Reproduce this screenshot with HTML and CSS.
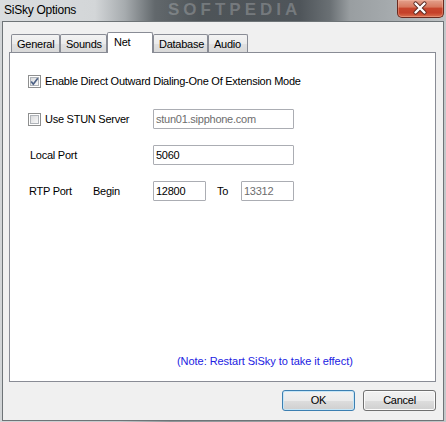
FILE: index.html
```html
<!DOCTYPE html>
<html>
<head>
<meta charset="utf-8">
<title>SiSky Options</title>
<link rel="stylesheet" href="styles.css">
</head>
<body>
<div class="window">
  <div class="titlebar">
    <span class="title">SiSky Options</span>
    <span class="wm">SOFTPEDIA</span>
    <div class="close">
      <svg width="47" height="18" viewBox="0 0 47 18">
        <path d="M18.5 4.5 L27.5 13.5 M27.5 4.5 L18.5 13.5" stroke="#5a2a22" stroke-width="4.2" stroke-linecap="round"/>
        <path d="M18.5 4.5 L27.5 13.5 M27.5 4.5 L18.5 13.5" stroke="#ffffff" stroke-width="2.4" stroke-linecap="round"/>
      </svg>
    </div>
  </div>
  <div class="client">
    <div class="tabs">
      <div class="tab w-general">General</div>
      <div class="tab w-sounds">Sounds</div>
      <div class="tab active w-net">Net</div>
      <div class="tab w-db">Database</div>
      <div class="tab w-audio">Audio</div>
    </div>
    <div class="panel">
      <div class="row row-check">
        <svg class="cb" width="13" height="13" viewBox="0 0 13 13">
          <defs><linearGradient id="cbg1" x1="0" y1="0" x2="1" y2="1"><stop offset="0" stop-color="#d8d9db"/><stop offset="1" stop-color="#fbfbfb"/></linearGradient></defs>
          <rect x="0.5" y="0.5" width="12" height="12" fill="#ffffff" stroke="#8e8f8f"/>
          <rect x="2.5" y="2.5" width="8" height="8" fill="url(#cbg1)" stroke="#b0b4b9"/>
          <path d="M3.2 6.4 L5.3 9.2 L9.8 3.2" fill="none" stroke="#4d6185" stroke-width="1.7"/>
        </svg>
        <span>Enable Direct Outward Dialing-One Of Extension Mode</span>
      </div>
      <div class="row row-stun">
        <div class="lbl lbl-check">
          <svg class="cb" width="13" height="13" viewBox="0 0 13 13">
            <defs><linearGradient id="cbg2" x1="0" y1="0" x2="1" y2="1"><stop offset="0" stop-color="#d8d9db"/><stop offset="1" stop-color="#fbfbfb"/></linearGradient></defs>
            <rect x="0.5" y="0.5" width="12" height="12" fill="#ffffff" stroke="#8e8f8f"/>
            <rect x="2.5" y="2.5" width="8" height="8" fill="url(#cbg2)" stroke="#b0b4b9"/>
          </svg>
          <span>Use STUN Server</span>
        </div>
        <div class="input wide disabled">stun01.sipphone.com</div>
      </div>
      <div class="row">
        <div class="lbl lbl-local">Local Port</div>
        <div class="input wide">5060</div>
      </div>
      <div class="row">
        <div class="lbl-rtp">RTP Port</div>
        <div class="lbl-begin">Begin</div>
        <div class="input narrow">12800</div>
        <div class="lbl-to">To</div>
        <div class="input narrow disabled">13312</div>
      </div>
      <div class="note">(Note: Restart SiSky to take it effect)</div>
    </div>
    <div class="buttons">
      <div class="btn default">OK</div>
      <div class="btn">Cancel</div>
    </div>
  </div>
</div>
</body>
</html>
```

FILE: styles.css
```css
* { box-sizing: border-box; }
html, body { margin: 0; padding: 0; }
body {
  width: 446px;
  height: 422px;
  overflow: hidden;
  font-family: "Liberation Sans", Arial, sans-serif;
  font-size: 11px;
  letter-spacing: -0.25px;
  color: #000;
  background: #cfd3d5;
}
.window {
  width: 446px;
  height: 422px;
  display: flex;
  flex-direction: column;
  background: linear-gradient(to right, #d2d5d7 0, #c3c7ca 120px, #8e9497 170px, #a1a6a9 340px, #c4c8ca 446px);
}
.titlebar {
  position: relative;
  height: 21px;
  flex: none;
  padding-left: 4px;
  background: linear-gradient(to right, #dadddf 0, #d3d6d8 95px, #a6abae 125px, #62686c 155px, #4e5458 200px, #4f555a 300px, #6a7074 330px, #999ea1 350px, #a7acaf 395px, #bfc3c5 446px);
}
.title {
  position: relative;
  z-index: 2;
  font-size: 12px;
  line-height: 21px;
  color: #000;
}
.wm {
  position: absolute;
  left: 168px;
  top: 0;
  font-size: 17px;
  line-height: 19px;
  font-weight: bold;
  letter-spacing: 4px;
  color: rgba(255, 255, 255, 0.22);
  white-space: nowrap;
}
.close {
  position: absolute;
  top: 0;
  right: 2px;
  width: 47px;
  height: 18px;
  border: 1px solid #6a2a1f;
  border-top: none;
  border-radius: 0 0 5px 5px;
  background: linear-gradient(#e3a08c 0%, #d87a60 40%, #c7462d 50%, #c54029 75%, #d9704f 100%);
  box-shadow: inset 0 0 0 1px rgba(255, 200, 180, 0.35);
  overflow: hidden;
}
.close svg { display: block; margin: -1px 0 0 -1px; }
.client {
  flex: 1;
  margin: 0 2px 1px 2px;
  border: 1px solid #6e7477;
  background: #f0f0f0;
  padding: 10px 7px 0 6px;
}
.tabs {
  display: flex;
  align-items: flex-end;
  height: 20px;
  padding-left: 2px;
}
.tab {
  height: 18px;
  border: 1px solid #898c95;
  border-bottom: none;
  border-radius: 2px 2px 0 0;
  background: linear-gradient(#f3f3f3 0%, #ebebeb 50%, #e1e1e1 51%, #d9d9d9 100%);
  padding: 1px 0 0 5px;
  line-height: 16px;
  white-space: nowrap;
}
.tab.active {
  height: 21px;
  background: #fff;
  margin-bottom: -1px;
  position: relative;
  z-index: 1;
  padding-left: 6px;
}
.w-general { width: 49px; }
.w-sounds { width: 47px; }
.w-net { width: 46px; }
.w-db { width: 55px; }
.w-audio { width: 40px; }
.panel {
  width: 427px;
  height: 330px;
  border: 1px solid #898c95;
  background: #fff;
  padding: 22px 0 0 18px;
  display: flex;
  flex-direction: column;
}
.row {
  display: flex;
  align-items: center;
  height: 20px;
  margin-top: 16px;
  white-space: nowrap;
}
.row-check {
  height: 13px;
  margin-top: 0;
  line-height: 13px;
}
.row-stun { margin-top: 21px; }
.cb { display: block; flex: none; margin-right: 4px; }
.lbl {
  width: 125px;
  flex: none;
  display: flex;
  align-items: center;
}
.lbl-local { padding-left: 2px; }
.lbl-rtp { width: 65px; padding-left: 1px; flex: none; }
.lbl-begin { width: 60px; flex: none; }
.lbl-to { width: 24px; margin-left: 11px; flex: none; }
.input {
  height: 20px;
  border: 1px solid #abadb3;
  border-radius: 1px;
  background: #fff;
  padding-left: 2px;
  line-height: 18px;
  flex: none;
  overflow: hidden;
}
.input.wide { width: 141px; }
.input.narrow { width: 53px; }
.input.disabled { color: #6d6d6d; }
.note {
  margin-top: 154px;
  margin-left: 149px;
  line-height: 13px;
  color: #2121e2;
  letter-spacing: -0.05px;
  white-space: nowrap;
}
.buttons {
  display: flex;
  justify-content: flex-end;
  gap: 8px;
  margin-top: 8px;
  width: 427px;
}
.btn {
  width: 73px;
  height: 21px;
  border: 1px solid #707070;
  border-radius: 3px;
  background: linear-gradient(#f2f2f2 0%, #ebebeb 50%, #dddddd 51%, #cfcfcf 100%);
  box-shadow: inset 0 0 0 1px #fbfbfb;
  text-align: center;
  line-height: 19px;
}
.btn.default {
  border-color: #3c7fb1;
  box-shadow: inset 0 0 0 1px #c6e6f7;
}
```
